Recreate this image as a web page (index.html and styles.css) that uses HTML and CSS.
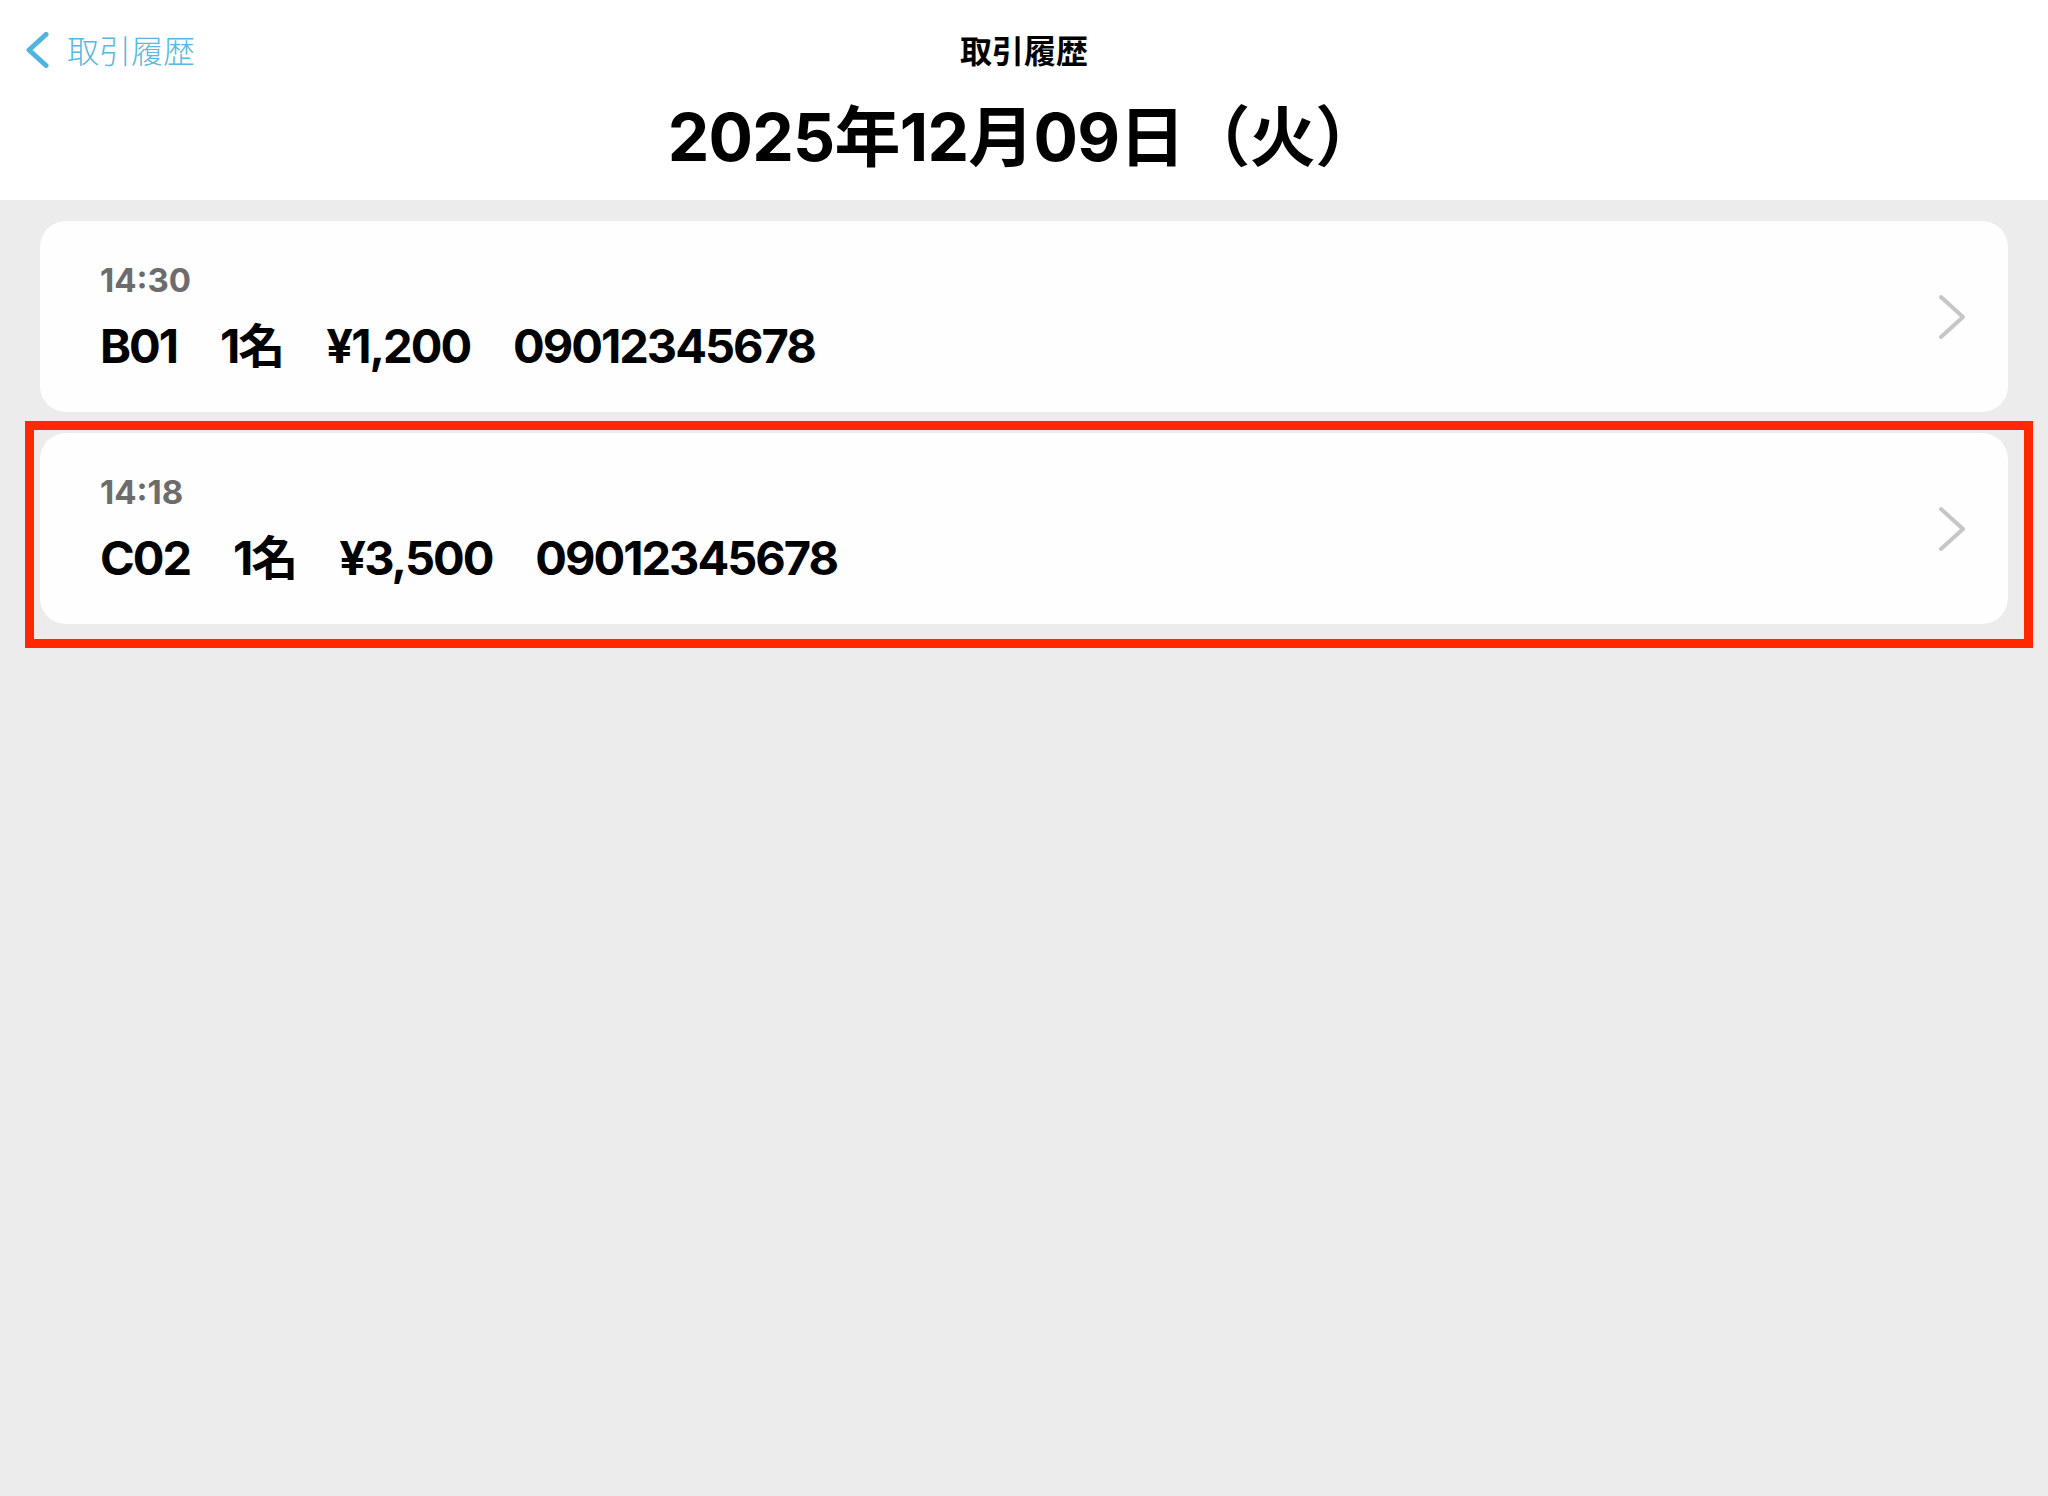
FILE: index.html
```html
<!DOCTYPE html>
<html lang="ja">
<head>
    <meta charset="UTF-8">
    <meta name="viewport" content="width=device-width, initial-scale=1.0">
    <title>取引履歴</title>
    <link rel="stylesheet" href="styles.css">
</head>
<body>
    <header class="topbar">
        <nav class="navbar">
            <a class="back-link" href="#">
                <svg class="back-icon" width="26" height="40" viewBox="0 0 26 40">
                    <polyline points="22,2.5 5,18 22,33.5" />
                </svg>
                <span>取引履歴</span>
            </a>
            <div class="nav-title">取引履歴</div>
            <div></div>
        </nav>
        <h1 class="date-title">2025年12月09日（火）</h1>
    </header>

    <main class="history-list">
        <a class="history-row" href="#">
            <div class="row-body">
                <div class="row-time">14:30</div>
                <div class="row-main">
                    <span>B01</span>
                    <span>1名</span>
                    <span>¥1,200</span>
                    <span>09012345678</span>
                </div>
            </div>
            <svg class="row-chevron" width="28" height="46" viewBox="0 0 28 46">
                <polyline points="3,3 25,23 3,43" />
            </svg>
        </a>

        <div class="marked">
            <a class="history-row" href="#">
                <div class="row-body">
                    <div class="row-time">14:18</div>
                    <div class="row-main">
                        <span>C02</span>
                        <span>1名</span>
                        <span>¥3,500</span>
                        <span>09012345678</span>
                    </div>
                </div>
                <svg class="row-chevron" width="28" height="46" viewBox="0 0 28 46">
                    <polyline points="3,3 25,23 3,43" />
                </svg>
            </a>
        </div>
    </main>
</body>
</html>
```

FILE: styles.css
```css
body {
    font-family: "Liberation Sans", "Noto Sans CJK JP", sans-serif;
    background: #ececec;
    color: #000000;
    margin: 0;
    min-height: 100vh;
}
a {
    color: inherit;
    text-decoration: none;
}
.topbar {
    background: #ffffff;
    padding-bottom: 23px;
}
.navbar {
    display: grid;
    grid-template-columns: 1fr auto 1fr;
    align-items: center;
    padding: 32px 24px 0;
    line-height: 40px;
    font-size: 32px;
}
.back-link {
    display: flex;
    align-items: center;
    gap: 17px;
    color: #58b8e1;
    font-weight: 300;
}
.back-icon {
    display: block;
}
.back-icon polyline {
    fill: none;
    stroke: #4fb4df;
    stroke-width: 5;
    stroke-linecap: round;
    stroke-linejoin: round;
}
.nav-title {
    font-weight: 700;
    text-align: center;
}
.date-title {
    margin: 25px 0 0;
    font-family: Inter, "Noto Sans CJK JP", sans-serif;
    font-size: 66px;
    line-height: 80px;
    font-weight: 700;
    letter-spacing: -0.75px;
    text-align: center;
}
.history-list {
    display: flex;
    flex-direction: column;
    gap: 21px;
    padding: 21px 40px;
}
.history-row {
    display: flex;
    align-items: center;
    background: #fefefe;
    border-radius: 26px;
    padding: 39px 42px 38px 60px;
}
.row-body {
    flex: 1;
    font-family: Inter, "Noto Sans CJK JP", sans-serif;
}
.row-time {
    font-size: 33px;
    line-height: 40px;
    font-weight: 700;
    color: #6c6c6c;
}
.row-main {
    display: flex;
    gap: 43px;
    margin-top: 18px;
    font-size: 47px;
    line-height: 56px;
    font-weight: 700;
    letter-spacing: -2px;
}
.row-chevron {
    display: block;
}
.row-chevron polyline {
    fill: none;
    stroke: #c6c6c6;
    stroke-width: 4;
    stroke-linecap: round;
    stroke-linejoin: round;
}
.marked {
    position: relative;
}
/* annotation frame drawn round the second row */
.marked::after {
    content: "";
    position: absolute;
    top: -12px;
    left: -15px;
    right: -25px;
    bottom: -24px;
    border: 9px solid #ff2800;
    pointer-events: none;
}
```
